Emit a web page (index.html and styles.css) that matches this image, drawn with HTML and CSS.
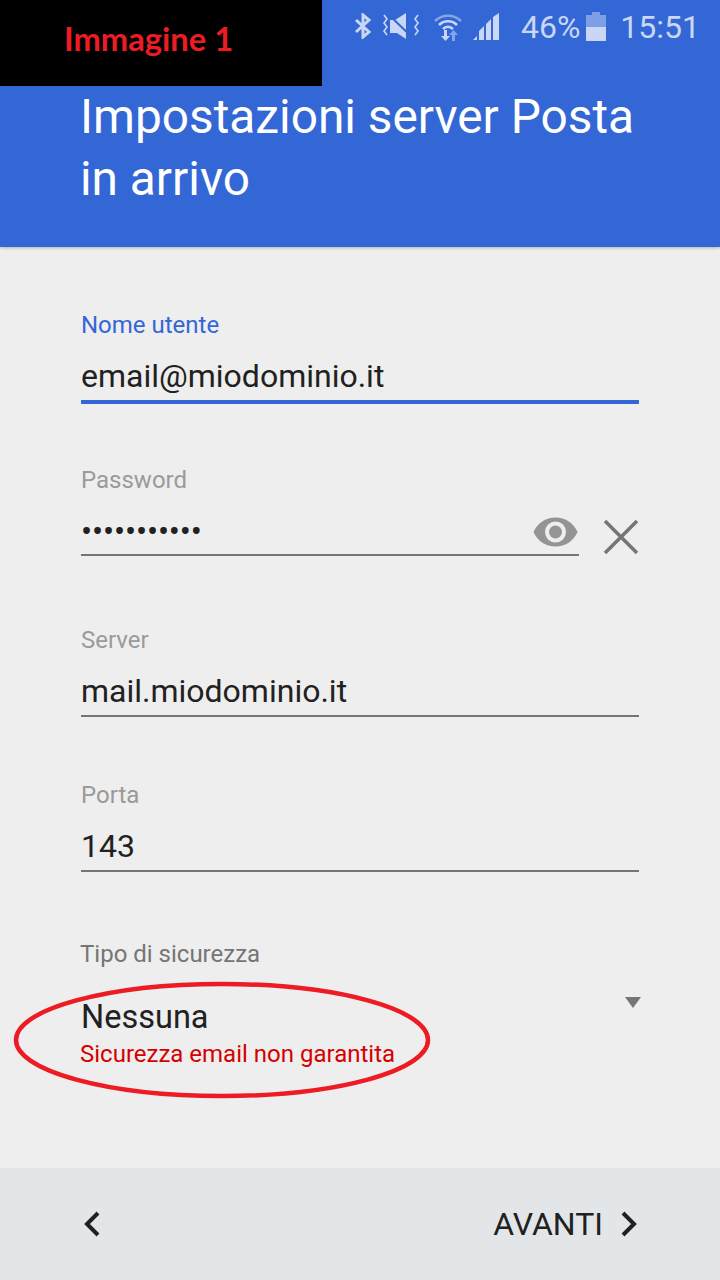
FILE: index.html
```
<!DOCTYPE html>
<html lang="it">
<head>
<meta charset="utf-8">
<title>Impostazioni server Posta in arrivo</title>
<link rel="stylesheet" href="styles.css">
</head>
<body>
<div class="app">
  <header class="header">
    <div class="status">
      <svg class="ic-bt" viewBox="0 0 18 26"><path d="M2 7l13 12-6 5V2l6 5L2 19" fill="none" stroke="currentColor" stroke-width="3"/></svg>
      <svg class="ic-vib" viewBox="0 0 40 28"><path d="M3 3l3 4-3 4 3 4-3 4 3 4M37 3l-3 4 3 4-3 4 3 4-3 4" fill="none" stroke="currentColor" stroke-width="1.6"/><path d="M9 8h5l11-7v26l-9-6H9z" fill="currentColor"/><path d="M8 3l24 23" stroke="#3367d6" stroke-width="2"/></svg>
      <svg class="ic-wifi" viewBox="0 0 28 28"><path d="M1 8C8 1 20 1 27 8" fill="none" stroke="currentColor" stroke-opacity=".55" stroke-width="2.6"/><path d="M5 12c5-5 13-5 18 0M9 16c3-3 7-3 10 0" fill="none" stroke="currentColor" stroke-width="2.6"/><path d="M10 17h3v6h3l-4.500 5-4.500-5h3z" fill="currentColor"/><path d="M18 28v-6h-3l4.500-5 4.500 5h-3v6z" fill="currentColor" fill-opacity=".55"/></svg>
      <svg class="ic-sig" viewBox="0 0 27 27"><path d="M0 27l4-4v4zM6 27v-9l5-5v14zM13 27V11l5-5v21zM20 27V4l6-4v27z" fill="currentColor"/></svg>
      <span class="pct">46%</span>
      <svg class="ic-bat" viewBox="0 0 20 29"><path d="M6 0h8v3h6v12H0V3h6z" fill="currentColor" fill-opacity=".5"/><path d="M0 15h20v14H0z" fill="currentColor"/></svg>
      <span class="time">15:51</span>
    </div>
    <h1 class="title">Impostazioni server Posta in arrivo</h1>
  </header>

  <main class="form">
    <div class="field field-user">
      <label class="label label-active">Nome utente</label>
      <div class="value value-active">email@miodominio.it</div>
    </div>
    <div class="field field-pass">
      <label class="label">Password</label>
      <div class="pass-row">
        <div class="value value-pass">
          <span class="dots">•••••••••••</span>
          <svg class="ic-eye" viewBox="0 0 44 30"><path d="M0 15C4 6 12 .500 22 .500S40 6 44 15c-4 9-12 14.500-22 14.500S4 24 0 15z" fill="#949494"/><circle cx="22" cy="15" r="10.500" fill="#eee"/><circle cx="22" cy="15" r="6.500" fill="#949494"/></svg>
        </div>
        <svg class="ic-x" viewBox="0 0 36 36"><path d="M2 2l32 32M34 2L2 34" fill="none" stroke="#757575" stroke-width="3.500"/></svg>
      </div>
    </div>
    <div class="field field-server">
      <label class="label">Server</label>
      <div class="value">mail.miodominio.it</div>
    </div>
    <div class="field field-port">
      <label class="label">Porta</label>
      <div class="value">143</div>
    </div>
    <div class="field field-sec">
      <label class="label label-dark">Tipo di sicurezza</label>
      <div class="select">
        <span class="select-val">Nessuna</span>
        <span class="caret"></span>
      </div>
      <div class="warn">Sicurezza email non garantita</div>
    </div>
  </main>

  <footer class="footer">
    <svg class="chev" viewBox="0 0 16 26"><path d="M14 2L3 13l11 11" fill="none" stroke="#212121" stroke-width="4"/></svg>
    <div class="next">
      <span>AVANTI</span>
      <svg class="chev" viewBox="0 0 16 26"><path d="M2 2l11 11L2 24" fill="none" stroke="#212121" stroke-width="4"/></svg>
    </div>
  </footer>

  <div class="tag">Immagine 1</div>
  <svg class="ring" viewBox="0 0 420 120"><ellipse cx="210" cy="59" rx="206" ry="56" fill="none" stroke="#ed1c24" stroke-width="4.500"/></svg>
</div>
</body>
</html>
```
FILE: styles.css
```
* { box-sizing: border-box; }
html, body { margin: 0; padding: 0; }
body { width: 720px; height: 1280px; overflow: hidden; font-family: Roboto, "Liberation Sans", sans-serif; background: #eeeeee; color: #212121; }
.app { position: relative; width: 720px; height: 1280px; display: flex; flex-direction: column; }

.header { height: 247px; flex: none; background: #3367d6; box-shadow: 0 1px 3px rgba(0,0,0,.25); position: relative; z-index: 1; }
.status { height: 54px; display: flex; align-items: center; justify-content: flex-end; padding-right: 20px; color: #c9d6f5; }
.ic-bt { width: 18px; height: 26px; margin-right: 9px; margin-bottom: 2px; }
.ic-vib { width: 40px; height: 28px; margin-right: 13px; margin-bottom: 2px; }
.ic-wifi { width: 28px; height: 28px; margin-right: 11px; margin-bottom: 1px; }
.ic-sig { width: 27px; height: 27px; margin-right: 21px; margin-bottom: 1px; }
.pct { font-size: 32px; line-height: 54px; margin-right: 6px; }
.ic-bat { width: 20px; height: 29px; margin-right: 14px; margin-bottom: 1px; }
.time { font-size: 32px; line-height: 54px; }
.title { margin: 32px 70px 0 80px; font-size: 47.800px; font-weight: 400; line-height: 62px; color: #fff; }

.form { flex: 1; padding: 62px 81px 0; }
.field { display: block; }
.label { display: block; font-size: 24px; line-height: 32px; color: #9a9a9a; }
.label-active { color: #3367d6; }
.label-dark { color: #757575; margin-left: -1px; }
.value { font-size: 32px; line-height: 44px; height: 61px; padding-top: 13px; border-bottom: 2px solid #757575; }
.value-active { height: 63px; border-bottom: 4px solid #3367d6; }
.field-pass { margin-top: 60px; }
.field-server { margin-top: 68px; }
.field-port { margin-top: 62px; }
.field-sec { margin-top: 66px; }
.pass-row { display: flex; justify-content: space-between; align-items: flex-end; }
.value-pass { width: 498px; height: 60px; padding-top: 18px; display: flex; justify-content: space-between; }
.dots { font-size: 33px; line-height: 36px; letter-spacing: -.15px; }
.ic-eye { width: 45px; height: 30px; margin: 3px 1px 0 0; }
.ic-x { width: 36px; height: 36px; margin-bottom: 1px; }
.select { display: flex; justify-content: space-between; align-items: flex-start; margin-top: 25px; height: 44px; }
.select-val { font-size: 32.500px; line-height: 44px; }
.caret { width: 0; height: 0; margin: 2px -2px 0 0; border-left: 8px solid transparent; border-right: 8px solid transparent; border-top: 11px solid #757575; }
.warn { font-size: 24px; line-height: 30px; color: #d50000; margin: 0 0 0 -1px; }

.footer { height: 112px; flex: none; background: #e2e6e9; display: flex; justify-content: space-between; align-items: center; padding: 0 83px 0 84px; }
.chev { width: 16px; height: 26px; }
.next { display: flex; align-items: center; font-size: 32px; gap: 18px; }

.tag { position: absolute; left: 0; top: 0; width: 322px; height: 86px; background: #000; color: #ed1c24; font-family: Lato, sans-serif; font-weight: 700; font-size: 32.700px; line-height: 78px; padding-left: 64px; z-index: 2; }
.ring { position: absolute; left: 12px; top: 981px; width: 420px; height: 120px; z-index: 2; }
```
